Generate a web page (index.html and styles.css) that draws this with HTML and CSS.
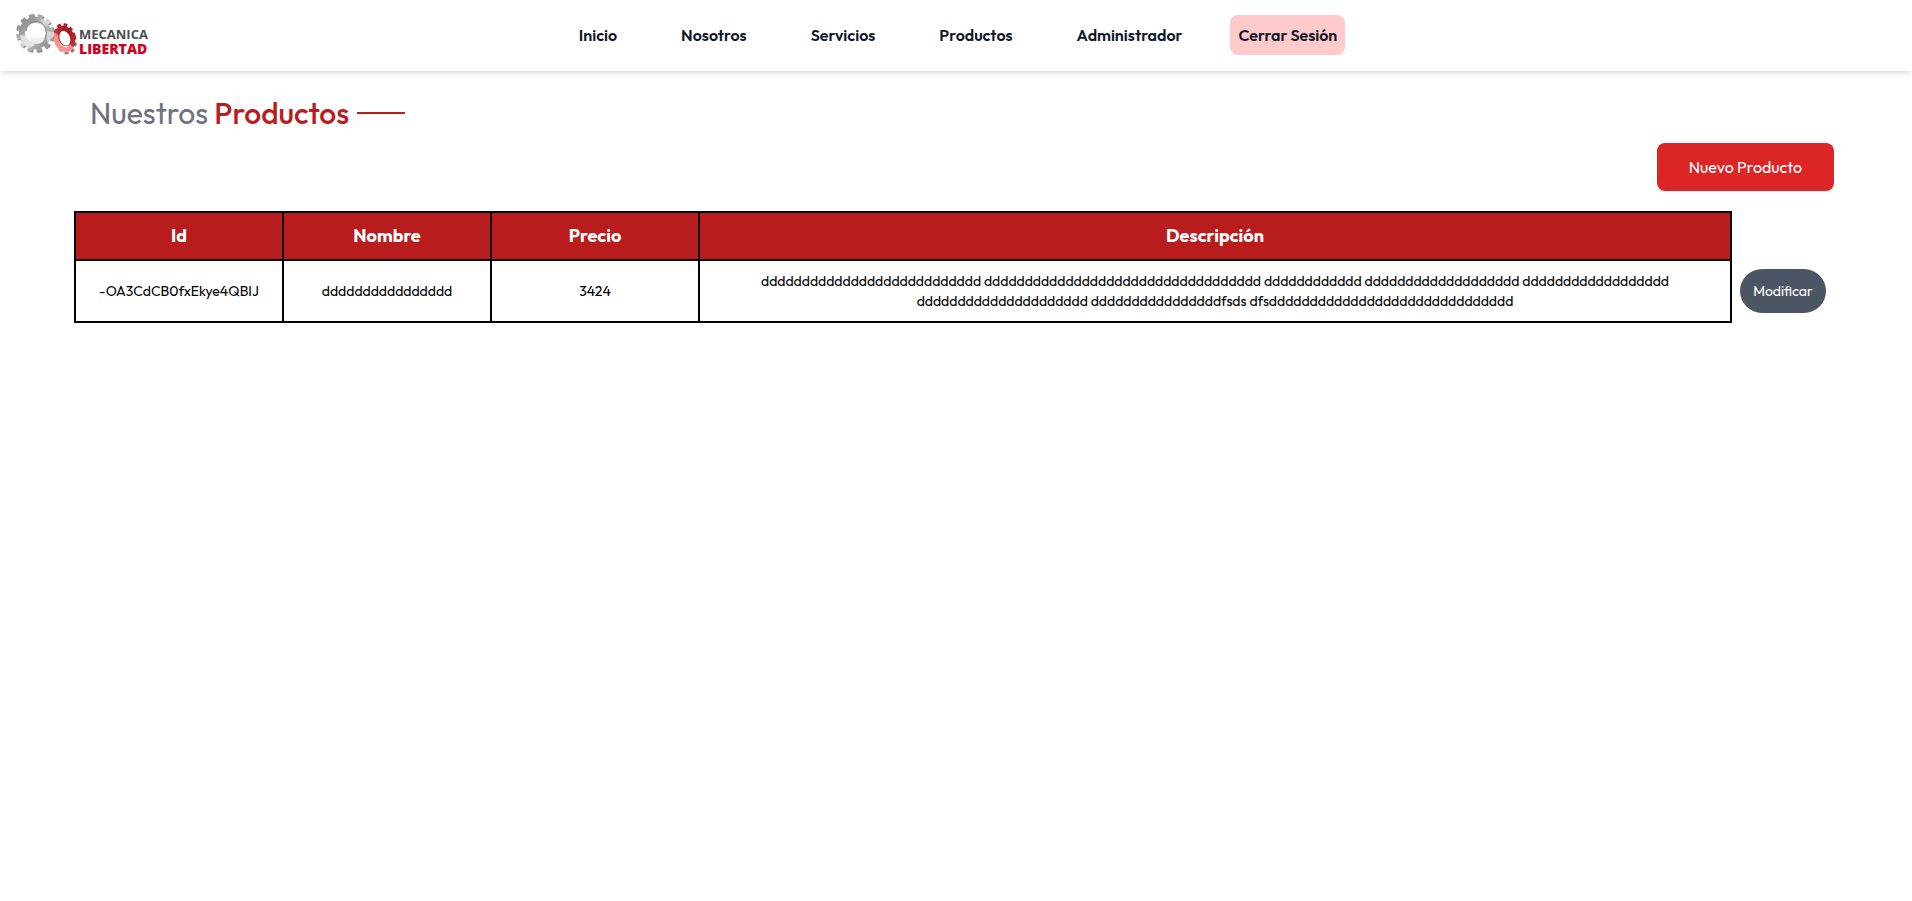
FILE: index.html
```html
<!DOCTYPE html>
<html lang="es">
<head>
<meta charset="utf-8">
<title>Mecanica Libertad - Productos</title>
<link rel="stylesheet" href="styles.css">
</head>
<body>
<header class="header">
  <a class="brand" href="#" aria-label="Mecanica Libertad">
    <svg class="brand-logo" width="144" height="46" viewBox="0 0 144 46" aria-hidden="true">
      <defs>
        <linearGradient id="steel" x1="0" y1="0" x2="1" y2="1">
          <stop offset="0" stop-color="#858585"/>
          <stop offset=".3" stop-color="#a9a9a9"/>
          <stop offset=".5" stop-color="#dedede"/>
          <stop offset=".65" stop-color="#b4b4b4"/>
          <stop offset="1" stop-color="#8d8d8d"/>
        </linearGradient>
        <linearGradient id="ruby" x1="1" y1="0" x2="0" y2="1">
          <stop offset="0" stop-color="#a3121d"/>
          <stop offset=".5" stop-color="#c9303a"/>
          <stop offset=".56" stop-color="#f58a86"/>
          <stop offset="1" stop-color="#ff9d98"/>
        </linearGradient>
        <linearGradient id="rim" x1="0" y1="0" x2="0" y2="1">
          <stop offset="0" stop-color="#b01c26"/>
          <stop offset=".6" stop-color="#a8323a"/>
          <stop offset="1" stop-color="#8c8080"/>
        </linearGradient>
      </defs>
      <g fill="none" transform="translate(0 1)">
        <circle cx="24" cy="21" r="17" stroke="#8a8a8a" stroke-width="4" stroke-dasharray="5 3.9" transform="rotate(8 24 21)"/>
        <circle cx="23" cy="20" r="17" stroke="url(#steel)" stroke-width="4" stroke-dasharray="5 3.9" transform="rotate(8 23 20)"/>
        <circle cx="23" cy="20" r="13" stroke="url(#steel)" stroke-width="6"/>
        <path d="M8 22l10 2 5 8-6 3q-8-4-9-13z" fill="#e2e2e2"/>
        <path d="M34 18l8 1-1 5-6 5z" fill="#d4d4d4"/>
        <circle cx="24" cy="20" r="10" fill="#fff"/>
        <path d="M14 18a10 10 0 0 1 19-4q3 6 0 12" stroke="#858585"/>
        <path d="M17 22q6 6 16 1-1 8-9 8-6-1-7-9z" fill="#eee"/>
      </g>
      <g fill="none" transform="rotate(-16 52 26)">
        <ellipse cx="53" cy="27" rx="9" ry="14" stroke="url(#rim)" stroke-width="4" stroke-dasharray="3.6 2.7"/>
        <ellipse cx="52" cy="27" rx="8" ry="11" stroke="url(#ruby)" stroke-width="5"/>
        <ellipse cx="53" cy="26" rx="6" ry="8" stroke="#8d1a22" stroke-width="1"/>
        <ellipse cx="53" cy="27" rx="5" ry="7" fill="#fff"/>
      </g>
      <text class="logo-top" x="67" y="27">MECANICA</text>
      <text class="logo-bottom" x="67" y="42">LIBERTAD</text>
    </svg>
  </a>
  <nav class="nav">
    <a class="nav-link" href="#">Inicio</a>
    <a class="nav-link" href="#">Nosotros</a>
    <a class="nav-link" href="#">Servicios</a>
    <a class="nav-link" href="#">Productos</a>
    <a class="nav-link" href="#">Administrador</a>
    <button class="logout" type="button">Cerrar Sesión</button>
  </nav>
</header>
<main class="page">
  <h1 class="title"><span>Nuestros <strong>Productos</strong></span><span class="title-line"></span></h1>
  <div class="actions"><button class="new-button" type="button">Nuevo Producto</button></div>
  <table class="products">
    <colgroup><col class="col-short"><col class="col-short"><col class="col-short"><col><col class="col-action"></colgroup>
    <thead>
      <tr><th>Id</th><th>Nombre</th><th>Precio</th><th>Descripción</th><td class="action"></td></tr>
    </thead>
    <tbody>
      <tr>
        <td>-OA3CdCB0fxEkye4QBIJ</td>
        <td>dddddddddddddddd</td>
        <td>3424</td>
        <td>ddddddddddddddddddddddddddd dddddddddddddddddddddddddddddddddd dddddddddddd ddddddddddddddddddd dddddddddddddddddd ddddddddddddddddddddd ddddddddddddddddfsds dfsdddddddddddddddddddddddddddddd</td>
        <td class="action"><button class="edit-button" type="button">Modificar</button></td>
      </tr>
    </tbody>
  </table>
</main>
</body>
</html>
```
FILE: styles.css
```css
* { box-sizing: border-box; }
body {
  margin: 0;
  background: #fff;
  color: #000;
  font-family: "Outfit", "Lato", sans-serif;
  font-size: 16px;
  line-height: 24px;
}
button { border: 0; font: inherit; cursor: pointer; }

.header {
  display: grid;
  grid-template-columns: 1fr auto 1fr;
  align-items: center;
  padding: 12px 24px 13px 12px;
  box-shadow: 0 4px 6px -1px rgba(0, 0, 0, .1), 0 2px 4px -2px rgba(0, 0, 0, .1);
}
.brand { display: flex; }
.brand-logo { display: block; }
.logo-top, .logo-bottom { font-family: "Open Sans", sans-serif; }
.logo-top { fill: #4d4d4f; font-size: 13px; font-weight: 700; }
.logo-bottom { fill: #d0021f; font-size: 14px; font-weight: 800; }
.nav { display: flex; align-items: center; gap: 16px; }
.nav-link {
  padding: 8px 24px;
  color: #0f172a;
  font-weight: 600;
  text-decoration: none;
}
.logout {
  margin-left: 8px;
  padding: 8px;
  border-radius: 8px;
  background: #fecaca;
  color: #0f172a;
  font-weight: 600;
}

.page { padding: 24px 78px 24px 74px; }
.title {
  display: flex;
  align-items: center;
  gap: 8px;
  margin: 0 0 12px;
  padding: 0 16px;
  color: #6b7280;
  font-size: 30px;
  font-weight: 400;
  line-height: 36px;
}
.title strong { color: #b91c1c; font-weight: 500; }
.title-line { width: 48px; height: 2px; background: #b91c1c; }
.actions { display: flex; justify-content: flex-end; margin-bottom: 20px; }
.new-button {
  padding: 12px 32px;
  border-radius: 8px;
  background: #dc2626;
  color: #fff;
}
.products {
  width: 100%;
  table-layout: fixed;
  border-collapse: collapse;
  text-align: center;
}
.col-short { width: 208px; }
.col-action { width: 103px; }
.products th {
  padding: 9px 16px;
  border: 2px solid #000;
  background: #b91c1c;
  color: #fff;
  font-size: 18px;
  font-weight: 700;
  line-height: 28px;
}
.products td {
  padding: 10px 20px;
  border: 2px solid #000;
  font-size: 14px;
  line-height: 20px;
}
.products .action { padding: 8px; border: 0; border-left: 2px solid #000; }
.edit-button {
  width: 100%;
  padding: 12px 0;
  border-radius: 22px;
  background: #4b5563;
  color: #fff;
}
```
